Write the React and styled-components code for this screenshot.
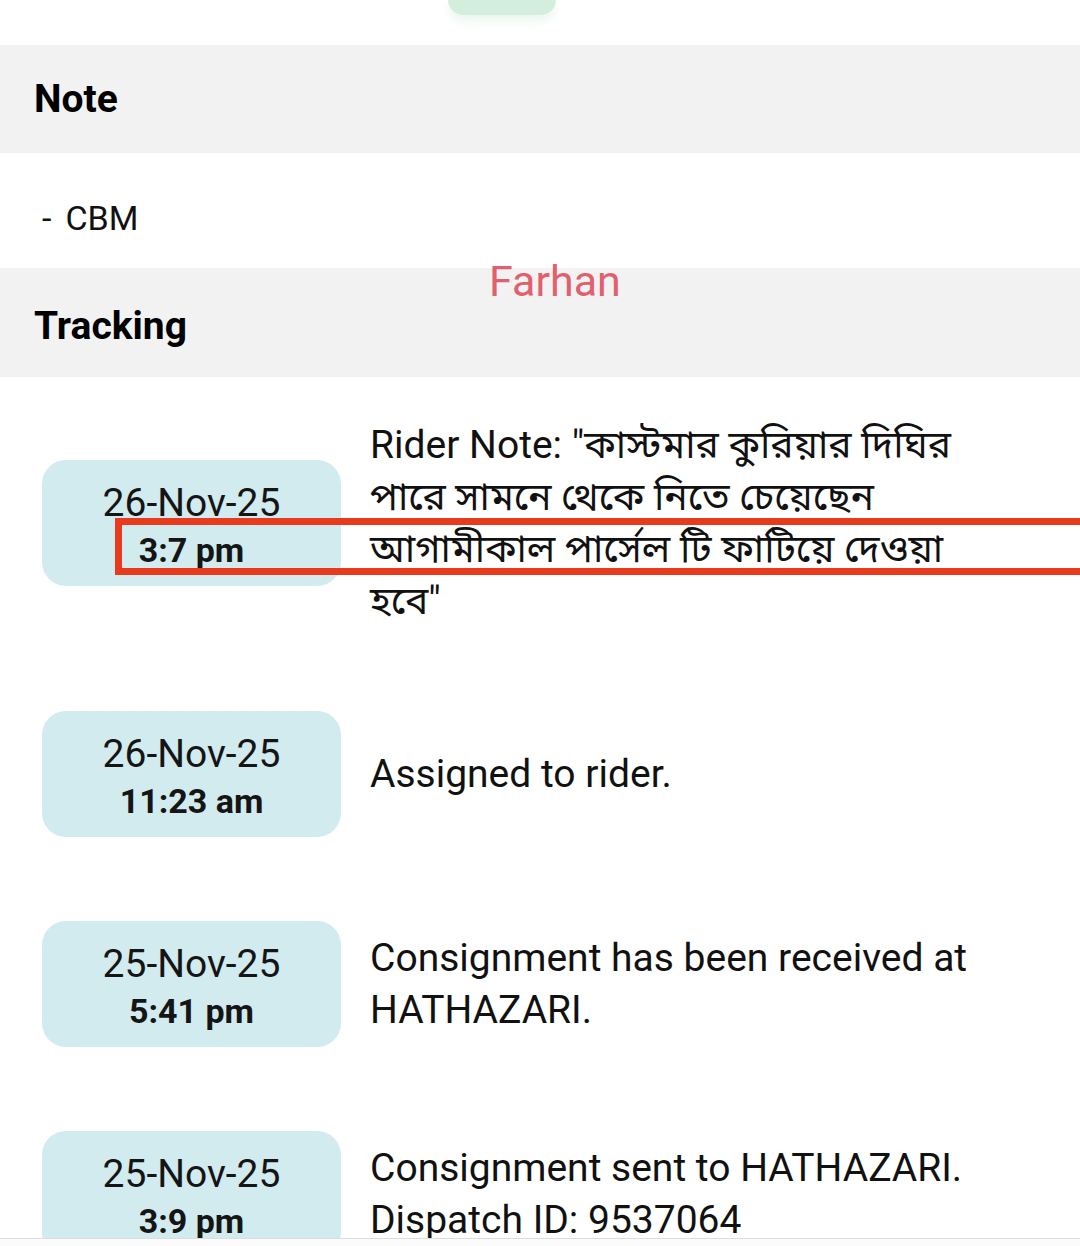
import React from 'react';
import styled, { createGlobalStyle } from 'styled-components';

const GlobalStyle = createGlobalStyle`
  html, body {
    margin: 0;
    padding: 0;
    background: #fff;
  }
  body {
    font-family: Roboto, "Noto Sans", "Noto Sans Bengali", "Liberation Sans", sans-serif;
    color: #111;
  }
`;

const Page = styled.div`
  position: relative;
  width: 1080px;
  height: 1246px;
  overflow: hidden;
  background: #fff;
`;

const TopStrip = styled.div`
  height: 45px;
  display: flex;
  justify-content: center;
`;

const GreenPill = styled.div`
  width: 108px;
  height: 15px;
  margin-right: 76px;
  background: #d3eedc;
  border-radius: 0 0 40px 40px;
  box-shadow: 0 6px 10px rgba(200, 230, 210, 0.35);
`;

const SectionHeader = styled.div`
  background: #f2f2f2;
  height: ${({ h }) => h}px;
  padding-left: 34px;
  display: flex;
  align-items: center;
  font-size: 39px;
  font-weight: 700;
  color: #000;
  padding-top: ${({ pt }) => pt || 0}px;
  box-sizing: border-box;
`;

const NoteBody = styled.div`
  height: 115px;
  display: flex;
  align-items: center;
  padding-left: 42px;
  padding-top: 15px;
  font-size: 34px;
  color: #111;
  gap: 14px;
  box-sizing: border-box;
`;

const TrackList = styled.div`
  display: flex;
  flex-direction: column;
  padding: 0 20px;
`;

const TrackRow = styled.div`
  display: flex;
  align-items: center;
  flex-shrink: 0;
  padding: 42px 22px;
  gap: 29px;
`;

const DateBadge = styled.div`
  flex: 0 0 299px;
  height: 126px;
  background: #d2ebef;
  border-radius: 24px;
  display: flex;
  flex-direction: column;
  align-items: center;
  justify-content: center;
  color: #151515;
  padding-top: 6px;
  box-sizing: border-box;
`;

const DateText = styled.div`
  font-size: 39px;
  line-height: 48px;
`;

const TimeText = styled.div`
  font-size: 34px;
  font-weight: 700;
  line-height: 46px;
`;

const Message = styled.div`
  font-size: 39px;
  line-height: 52px;
  color: #111;
  font-family: Roboto, "Noto Sans Bengali", "Noto Sans", "Lohit Bengali", "FreeSans", sans-serif;
  max-width: 620px;
`;

const BottomBar = styled.div`
  position: absolute;
  left: 0;
  right: 0;
  bottom: 0;
  height: 7px;
  background: #fbfbfb;
  border-top: 1px solid #dcdcdc;
`;

const Watermark = styled.div`
  position: absolute;
  left: 489px;
  top: 256px;
  font-size: 43px;
  color: #e0606e;
`;

const Annotation = styled.div`
  position: absolute;
  left: 115px;
  top: 518px;
  width: 980px;
  height: 57px;
  border: 7px solid #e83a1c;
  box-sizing: border-box;
`;

const items = [
  {
    date: '26-Nov-25',
    time: '3:7 pm',
    text: 'Rider Note: "কাস্টমার কুরিয়ার দিঘির পারে সামনে থেকে নিতে চেয়েছেন আগামীকাল পার্সেল টি ফাটিয়ে দেওয়া হবে"',
  },
  { date: '26-Nov-25', time: '11:23 am', text: 'Assigned to rider.' },
  { date: '25-Nov-25', time: '5:41 pm', text: 'Consignment has been received at HATHAZARI.' },
  { date: '25-Nov-25', time: '3:9 pm', text: 'Consignment sent to HATHAZARI. Dispatch ID: 9537064' },
];

export default function App() {
  return (
    <Page>
      <GlobalStyle />
      <TopStrip>
        <GreenPill />
      </TopStrip>
      <SectionHeader h={108}>Note</SectionHeader>
      <NoteBody>
        <span>-</span>
        <span>CBM</span>
      </NoteBody>
      <SectionHeader h={109} pt={6}>Tracking</SectionHeader>
      <TrackList>
        {items.map((it, i) => (
          <TrackRow key={i}>
            <DateBadge>
              <DateText>{it.date}</DateText>
              <TimeText>{it.time}</TimeText>
            </DateBadge>
            <Message>{it.text}</Message>
          </TrackRow>
        ))}
      </TrackList>
      <Watermark>Farhan</Watermark>
      <Annotation />
      <BottomBar />
    </Page>
  );
}
